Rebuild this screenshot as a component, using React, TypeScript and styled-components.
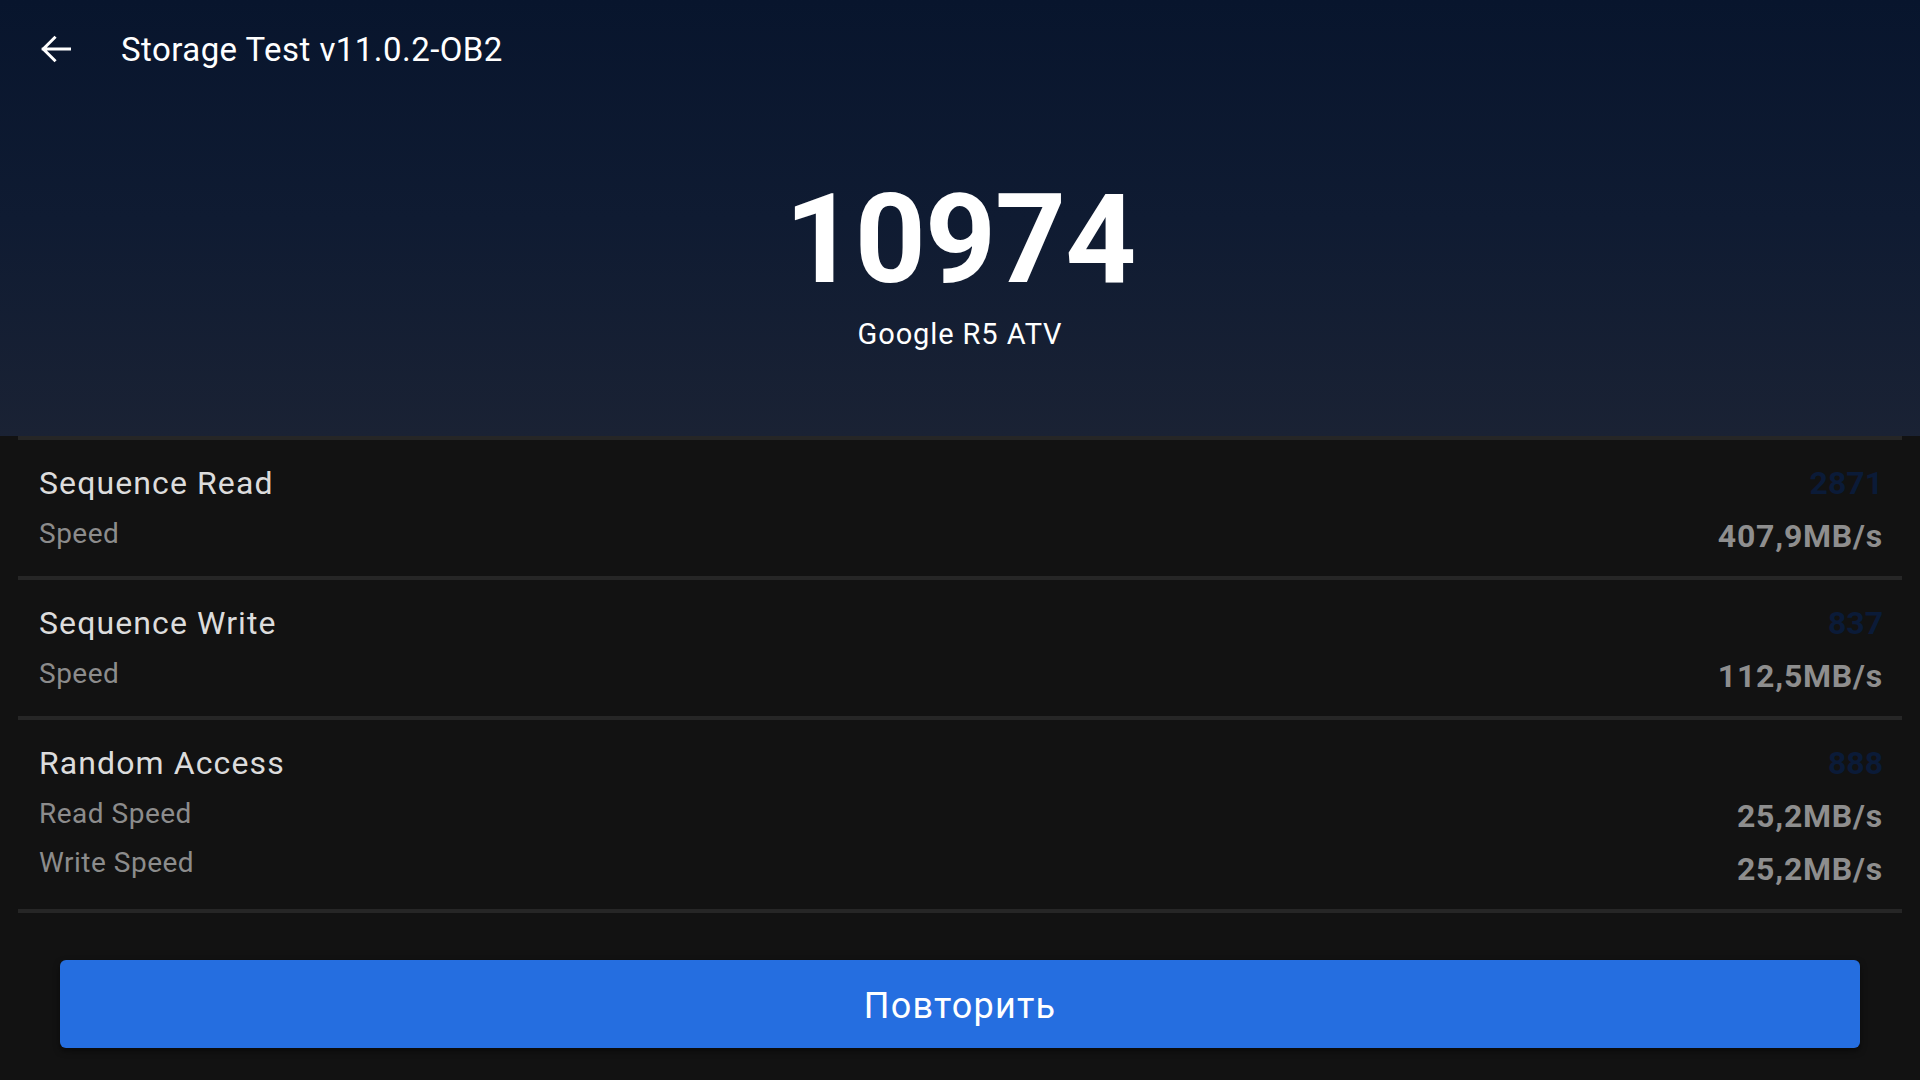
import React from 'react';
import styled, { createGlobalStyle } from 'styled-components';

type ResultRow = {
  title: string;
  score: string;
  lines: { label: string; value: string }[];
};

const results: ResultRow[] = [
  {
    title: 'Sequence Read',
    score: '2871',
    lines: [{ label: 'Speed', value: '407,9MB/s' }],
  },
  {
    title: 'Sequence Write',
    score: '837',
    lines: [{ label: 'Speed', value: '112,5MB/s' }],
  },
  {
    title: 'Random Access',
    score: '888',
    lines: [
      { label: 'Read Speed', value: '25,2MB/s' },
      { label: 'Write Speed', value: '25,2MB/s' },
    ],
  },
];

const BackArrow = () => (
  <svg width="36" height="36" viewBox="0 0 24 24" fill="none">
    <path
      d="M21 12H3.5M11 4.5L3.5 12l7.5 7.5"
      stroke="#fff"
      strokeWidth="2"
      strokeLinecap="square"
    />
  </svg>
);

const App = () => {
  return (
    <>
      <GlobalStyle />
      <Screen>
        <Hero>
          <TopBar>
            <BackBtn>
              <BackArrow />
            </BackBtn>
            <Title>Storage Test v11.0.2-OB2</Title>
          </TopBar>
          <Score>10974</Score>
          <Device>Google R5 ATV</Device>
        </Hero>

        <List>
          {results.map((row) => (
            <Row key={row.title}>
              <LeftCol>
                <RowTitle>{row.title}</RowTitle>
                {row.lines.map((line) => (
                  <Label key={line.label}>{line.label}</Label>
                ))}
              </LeftCol>
              <RightCol>
                <SubScore>{row.score}</SubScore>
                {row.lines.map((line) => (
                  <Value key={line.label}>{line.value}</Value>
                ))}
              </RightCol>
            </Row>
          ))}
        </List>

        <Footer>
          <RetryButton>Повторить</RetryButton>
        </Footer>
      </Screen>
    </>
  );
};

const GlobalStyle = createGlobalStyle`
  html, body {
    margin: 0;
    padding: 0;
    background: #121212;
  }
  * {
    box-sizing: border-box;
  }
  body {
    font-family: Roboto, "Noto Sans", "Liberation Sans", sans-serif;
  }
`;

const Screen = styled.div`
  width: 1920px;
  height: 1080px;
  background: #121212;
  display: flex;
  flex-direction: column;
  overflow: hidden;
`;

const Hero = styled.div`
  height: 436px;
  background: linear-gradient(180deg, #08152d 0%, #0f1b32 50%, #1a2234 100%);
  display: flex;
  flex-direction: column;
  align-items: center;
`;

const TopBar = styled.div`
  align-self: stretch;
  height: 98px;
  display: flex;
  align-items: center;
  padding: 0 0 0 38px;
`;

const BackBtn = styled.div`
  width: 36px;
  height: 36px;
  display: flex;
  align-items: center;
  justify-content: center;
  margin-right: 47px;
`;

const Title = styled.div`
  color: #ffffff;
  font-size: 33px;
  letter-spacing: 0.45px;
`;

const Score = styled.div`
  margin-top: 80px;
  color: #ffffff;
  font-size: 124px;
  font-weight: 700;
  line-height: 1;
  letter-spacing: -1px;
`;

const Device = styled.div`
  margin-top: 15px;
  color: #ffffff;
  font-size: 29px;
  letter-spacing: 0.9px;
`;

const List = styled.div`
  padding: 0 18px;
  display: flex;
  flex-direction: column;
`;

const Row = styled.div`
  display: flex;
  justify-content: space-between;
  align-items: flex-start;
  padding: 17px 19px 13px 21px;
  border-top: 4px solid #262626;

  &:last-child {
    border-bottom: 4px solid #262626;
  }
`;

const LeftCol = styled.div`
  display: flex;
  flex-direction: column;
`;

const RightCol = styled.div`
  display: flex;
  flex-direction: column;
  align-items: flex-end;
`;

const RowTitle = styled.div`
  color: #dcdcdc;
  font-size: 32px;
  line-height: 52px;
  letter-spacing: 1.1px;
`;

const Label = styled.div`
  color: #8c8c8c;
  font-size: 28px;
  line-height: 49px;
  letter-spacing: 0.5px;
`;

const SubScore = styled.div`
  color: #0b1b38;
  font-size: 32px;
  font-weight: 700;
  line-height: 53px;
`;

const Value = styled.div`
  color: #8e8e8e;
  font-size: 32px;
  font-weight: 700;
  line-height: 53px;
  letter-spacing: 0.8px;
`;

const Footer = styled.div`
  padding: 47px 60px 0;
`;

const RetryButton = styled.button`
  width: 100%;
  height: 88px;
  padding-top: 4px;
  border: none;
  border-radius: 6px;
  background: #256ee0;
  color: #ffffff;
  font-family: Roboto, "Noto Sans", sans-serif;
  font-size: 36px;
  letter-spacing: 1.2px;
  box-shadow: 0 3px 6px rgba(0, 0, 0, 0.5);
  cursor: pointer;
`;

export default App;
